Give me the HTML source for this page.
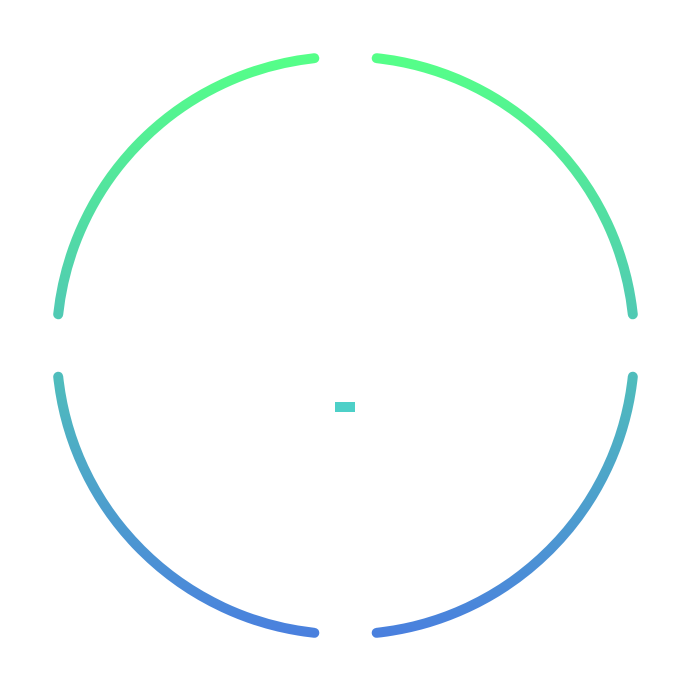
<!DOCTYPE html>
<html><head><meta charset="utf-8"><style>html,body{margin:0;padding:0;background:#fff;width:690px;height:690px;overflow:hidden}</style></head>
<body>
<svg width="690" height="690" viewBox="0 0 690 690">
<defs><linearGradient id="g" x1="0" y1="57" x2="0" y2="634" gradientUnits="userSpaceOnUse">
<stop offset="0" stop-color="#55ff88"/><stop offset="0.5" stop-color="#50c4b8"/><stop offset="1" stop-color="#4a80de"/></linearGradient></defs>
<g fill="none" stroke="url(#g)" stroke-width="10" stroke-linecap="round">
<path d="M314.3 58.2 A289 289 0 0 0 58.2 314.3"/>
<path d="M376.7 58.2 A289 289 0 0 1 632.8 314.3"/>
<path d="M58.2 376.7 A289 289 0 0 0 314.3 632.8"/>
<path d="M632.8 376.7 A289 289 0 0 1 376.7 632.8"/>
</g>
<rect x="335" y="402" width="20" height="10" fill="#4dd0c8"/>
</svg>
</body></html>
